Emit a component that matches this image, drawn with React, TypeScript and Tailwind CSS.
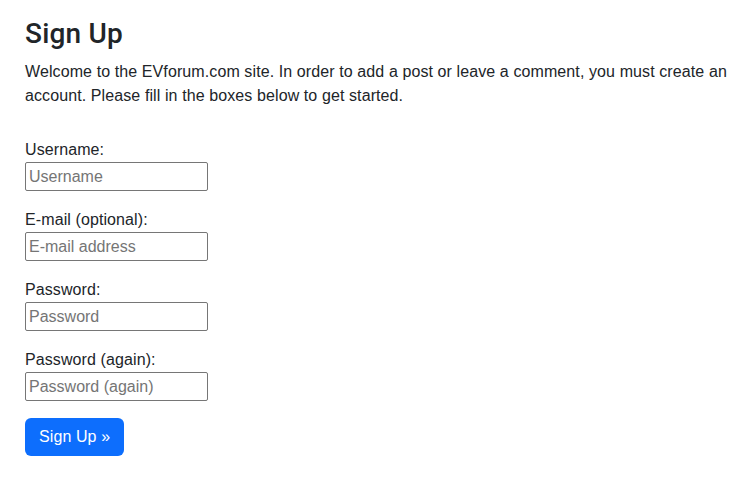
import React from 'react';

const fields = [
  { label: 'Username:', placeholder: 'Username', type: 'text' },
  { label: 'E-mail (optional):', placeholder: 'E-mail address', type: 'email' },
  { label: 'Password:', placeholder: 'Password', type: 'password' },
  { label: 'Password (again):', placeholder: 'Password (again)', type: 'password' },
];

export default function App() {
  return (
    <main className="min-h-screen bg-white pl-[25px] pr-[12px] pt-[17px] text-[#212529] font-['Liberation_Sans',Arial,sans-serif]">
      <h3 className="text-[28px] leading-[1.2] font-medium mb-[9px] font-['Roboto',sans-serif] tracking-[0.2px]">Sign Up</h3>
      <p className="text-[16px] leading-[24px] tracking-[0.1px]">
        Welcome to the EVforum.com site. In order to add a post or leave a comment, you must create an
        account. Please fill in the boxes below to get started.
      </p>

      <form className="mt-[29px]" onSubmit={(e) => e.preventDefault()}>
        {fields.map((f) => (
          <div key={f.label} className="mb-[16px]">
            <label className="block pt-[2px] text-[16px] leading-[22px] tracking-[0.1px]">{f.label}</label>
            <input
              type={f.type}
              placeholder={f.placeholder}
              className="block mt-[1px] w-[183px] h-[29px] pl-[3px] pr-[4px] pt-[1px] border border-[#767676] rounded-[2px] text-[16px] placeholder:text-[#757575] outline-none"
            />
          </div>
        ))}
        <button
          type="submit"
          className="mt-[1px] h-[38px] px-[14px] rounded-[6px] bg-[#0d6efd] text-white text-[16px] leading-[24px] tracking-[0.1px]"
        >
          Sign Up »
        </button>
      </form>
    </main>
  );
}
